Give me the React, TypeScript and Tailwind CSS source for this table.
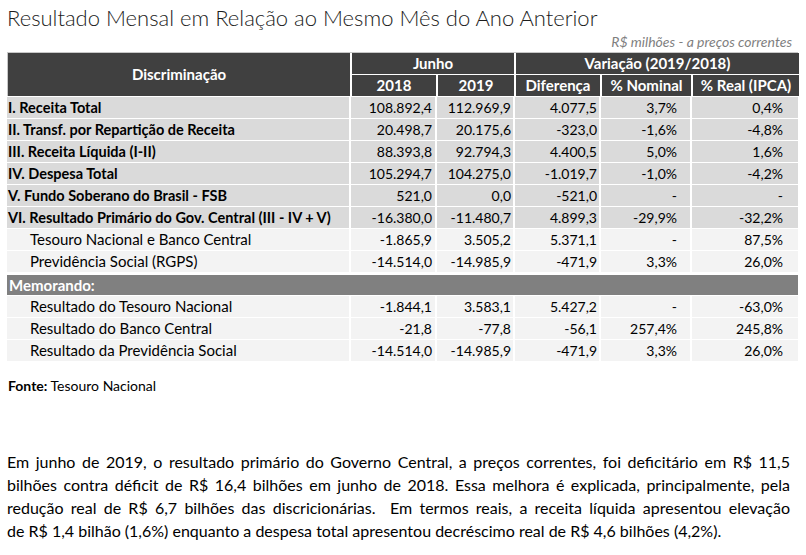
import React from "react";

// ---------------------------------------------------------------------------
// Data
// ---------------------------------------------------------------------------
type Row = {
  label: string;
  values: string[];
  bold?: boolean;
  indent?: boolean;
};

const mainRows: Row[] = [
  { label: "I. Receita Total", values: ["108.892,4", "112.969,9", "4.077,5", "3,7%", "0,4%"], bold: true },
  { label: "II. Transf. por Repartição de Receita", values: ["20.498,7", "20.175,6", "-323,0", "-1,6%", "-4,8%"], bold: true },
  { label: "III. Receita Líquida (I-II)", values: ["88.393,8", "92.794,3", "4.400,5", "5,0%", "1,6%"], bold: true },
  { label: "IV. Despesa Total", values: ["105.294,7", "104.275,0", "-1.019,7", "-1,0%", "-4,2%"], bold: true },
  { label: "V. Fundo Soberano do Brasil - FSB", values: ["521,0", "0,0", "-521,0", "-", "-"], bold: true },
  { label: "VI. Resultado Primário do Gov. Central (III - IV + V)", values: ["-16.380,0", "-11.480,7", "4.899,3", "-29,9%", "-32,2%"], bold: true },
  { label: "Tesouro Nacional e Banco Central", values: ["-1.865,9", "3.505,2", "5.371,1", "-", "87,5%"], indent: true },
  { label: "Previdência Social (RGPS)", values: ["-14.514,0", "-14.985,9", "-471,9", "3,3%", "26,0%"], indent: true },
];

const memoRows: Row[] = [
  { label: "Resultado do Tesouro Nacional", values: ["-1.844,1", "3.583,1", "5.427,2", "-", "-63,0%"], indent: true },
  { label: "Resultado do Banco Central", values: ["-21,8", "-77,8", "-56,1", "257,4%", "245,8%"], indent: true },
  { label: "Resultado da Previdência Social", values: ["-14.514,0", "-14.985,9", "-471,9", "3,3%", "26,0%"], indent: true },
];

const paragraph = [
  "Em junho de 2019, o resultado primário do Governo Central, a preços correntes, foi deficitário em R$ 11,5",
  "bilhões contra déficit de R$ 16,4 bilhões em junho de 2018. Essa melhora é explicada, principalmente, pela",
  "redução real de R$ 6,7 bilhões das discricionárias.  Em termos reais, a receita líquida apresentou elevação",
  "de R$ 1,4 bilhão (1,6%) enquanto a despesa total apresentou decréscimo real de R$ 4,6 bilhões (4,2%).",
];

// right padding per value column (2018, 2019, Diferença, % Nominal, % Real)
const valuePad = ["pr-[3px]", "pr-[2px]", "pr-[2px]", "pr-[13px]", "pr-[15px]"];

const gridCols = "grid grid-cols-[342px_84px_76px_84px_89px_106px] gap-x-[2px]";

function TableRow({ row }: { row: Row }) {
  const bg = row.bold ? "bg-[#dadada]" : "bg-[#f3f3f3]";
  return (
    <div className={`${gridCols} h-[21px] leading-[21px] text-black`}>
      <div
        className={`${bg} ${row.bold ? "font-bold pl-[1px] text-[14.5px]" : "pl-[23px] text-[15px]"} whitespace-nowrap`}
      >
        {row.label}
      </div>
      {row.values.map((v, i) => (
        <div key={i} className={`${bg} text-right text-[14px] ${valuePad[i]}`}>
          {v}
        </div>
      ))}
    </div>
  );
}

export default function App() {
  return (
    <div className="w-[806px] h-[555px] bg-white overflow-hidden font-['Lato',sans-serif] text-black">
      {/* Title */}
      <h1 className="pl-[7px] pt-[3px] text-[22px] leading-[30px] font-light text-[#1c1c1c] whitespace-nowrap">
        Resultado Mensal em Relação ao Mesmo Mês do Ano Anterior
      </h1>
      <div className="w-[792px] text-right text-[14px] leading-[16px] italic text-[#7f7f7f] mt-[1px]">
        R$ milhões - a preços correntes
      </div>

      {/* Table */}
      <div className="ml-[7px] mt-[2px] w-[791px]">
        <div className="border-t border-l border-[#c8c8c8]">
          <div className={`${gridCols} grid-rows-[21px_21px] gap-y-[1px] text-white font-bold text-[15px] leading-[21px]`}>
            <div className="row-span-2 bg-[#404040] flex items-center justify-center">Discriminação</div>
            <div className="col-span-2 bg-[#404040] text-center">Junho</div>
            <div className="col-span-3 bg-[#404040] text-center">Variação (2019/2018)</div>
            <div className="bg-[#404040] text-center">2018</div>
            <div className="bg-[#404040] text-center">2019</div>
            <div className="bg-[#404040] text-center">Diferença</div>
            <div className="bg-[#404040] text-center">% Nominal</div>
            <div className="bg-[#404040] text-center">% Real (IPCA)</div>
          </div>
        </div>

        <div className="flex flex-col gap-y-[1px] mt-[1px]">
          {mainRows.map((r, i) => (
            <TableRow key={i} row={r} />
          ))}
        </div>

        {/* Memorando */}
        <div className="mt-[3px] h-[20px] bg-[#808080] text-white font-bold text-[15px] leading-[20px] pl-[2px]">
          Memorando:
        </div>
        <div className="flex flex-col gap-y-[1px] mt-[1px]">
          {memoRows.map((r, i) => (
            <TableRow key={i} row={r} />
          ))}
        </div>
      </div>

      {/* Source */}
      <div className="pl-[8px] mt-[17px] text-[14px] leading-[16px]">
        <span className="font-bold">Fonte:</span> Tesouro Nacional
      </div>

      {/* Paragraph */}
      <div className="ml-[7px] mt-[56px] w-[783px] text-[16px] leading-[23px]">
        {paragraph.map((line, i) => (
          <p
            key={i}
            className={`whitespace-pre text-justify ${i < paragraph.length - 1 ? "[text-align-last:justify]" : ""}`}
          >
            {line}
          </p>
        ))}
      </div>
    </div>
  );
}
